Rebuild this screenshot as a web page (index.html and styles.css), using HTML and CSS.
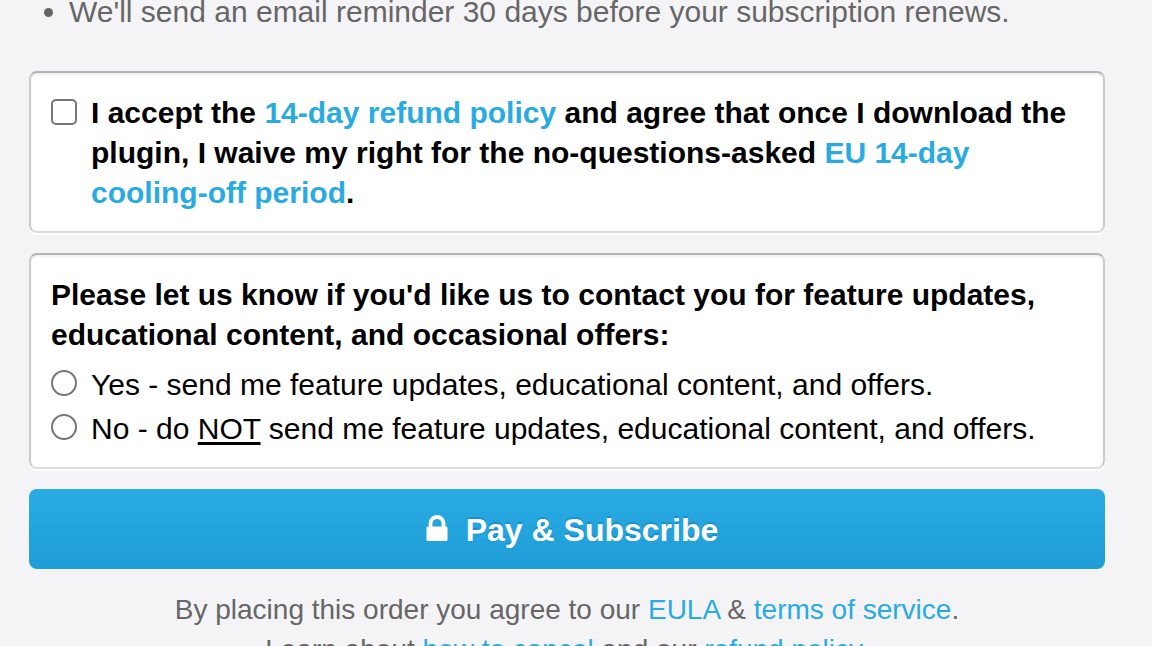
FILE: index.html
```html
<!DOCTYPE html>
<html lang="en">
<head>
<meta charset="utf-8">
<meta name="viewport" content="width=device-width, initial-scale=1">
<title>Pay &amp; Subscribe</title>
<link rel="stylesheet" href="styles.css">
</head>
<body>
<form class="checkout">
  <ul class="notes">
    <li>We'll send an email reminder 30 days before your subscription renews.</li>
  </ul>

  <div class="card">
    <div class="option">
      <input class="check" type="checkbox" id="accept">
      <label class="strong" for="accept">I accept the <a href="#refund">14-day refund policy</a> and agree that once I download the plugin, I waive my right for the no-questions-asked <a href="#eu">EU 14-day cooling-off period</a>.</label>
    </div>
  </div>

  <fieldset class="card">
    <legend class="strong question">Please let us know if you'd like us to contact you for feature updates, educational content, and occasional offers:</legend>
    <div class="option option-radio">
      <input class="check radio" type="radio" name="contact" id="contact-yes">
      <label for="contact-yes">Yes - send me feature updates, educational content, and offers.</label>
    </div>
    <div class="option option-radio">
      <input class="check radio" type="radio" name="contact" id="contact-no">
      <label for="contact-no">No - do <u>NOT</u> send me feature updates, educational content, and offers.</label>
    </div>
  </fieldset>

  <button class="pay" type="submit">
    <svg class="lock" viewBox="0 0 22 26" aria-hidden="true">
      <path d="M4.500 13V8.500a6.500 6.500 0 0 1 13 0V13" fill="none" stroke="currentColor" stroke-width="3.800"/>
      <rect x="0.500" y="11.500" width="21" height="14.500" rx="1.500" fill="currentColor"/>
    </svg>
    <span>Pay &amp; Subscribe</span>
  </button>

  <p class="terms">By placing this order you agree to our <a href="#eula">EULA</a> &amp; <a href="#terms">terms of service</a>.<br>Learn about <a href="#cancel">how to cancel</a> and our <a href="#refund">refund policy</a>.</p>
</form>
</body>
</html>
```
FILE: styles.css
```css
* {
  box-sizing: border-box;
}

body {
  margin: 0;
  height: 100vh;
  overflow: hidden;
  background: #f4f4f7;
  color: #000;
  font: 30px/40px "Liberation Sans", Arial, sans-serif;
}

a {
  color: #29abe2;
  text-decoration: none;
}

.checkout {
  display: flex;
  flex-direction: column;
  gap: 20px;
  padding: 0 47px 0 29px;
}

.notes {
  margin: 0 0 27px;
  padding: 0 0 0 40px;
  color: #666;
  line-height: 24px;
}

.card {
  min-width: 0;
  margin: 0;
  padding: 20px 20px 18px;
  border: 2px solid #ccc;
  border-top-color: #b3b3b3;
  border-bottom-color: #ddd;
  border-radius: 8px;
  background: #fff;
  box-shadow: 0 2px 0 #fff, inset 0 2px 2px #f0f0f0;
}

.strong {
  font-weight: bold;
}

.question {
  float: left;
  width: 100%;
  margin-bottom: 10px;
  padding: 0;
}

.option {
  display: flex;
  align-items: flex-start;
  gap: 14px;
  clear: both;
}

.option-radio + .option-radio {
  margin-top: 4px;
}

.check {
  appearance: none;
  flex: none;
  width: 26px;
  height: 26px;
  margin: 6px 0 0;
  border: 2px solid #767676;
  border-radius: 5px;
  background: #fff;
}

.radio {
  margin-top: 5px;
  border-radius: 50%;
}

u {
  text-decoration-thickness: 3px;
  text-underline-offset: 3px;
  text-decoration-skip-ink: none;
}

.pay {
  display: flex;
  align-items: center;
  justify-content: center;
  gap: 18px;
  height: 80px;
  padding: 2px 0 0 10px;
  border: 0;
  border-radius: 8px;
  background: linear-gradient(#29abe2, #1f9dd8);
  color: #fff;
  font: bold 32px/40px "Liberation Sans", Arial, sans-serif;
  text-shadow: 0 -2px 0 rgba(0, 80, 150, 0.25);
}

.lock {
  width: 22px;
  height: 26px;
  margin-bottom: 4px;
}

.terms {
  margin: 0;
  padding-top: 1px;
  color: #666;
  font-size: 28px;
  text-align: center;
}
```
